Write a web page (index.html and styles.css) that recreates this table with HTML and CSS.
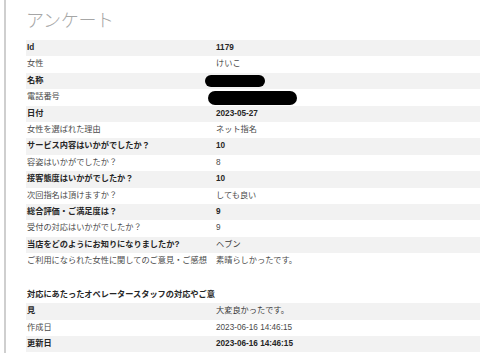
FILE: index.html
```html
<!DOCTYPE html>
<html lang="ja">
<head>
<meta charset="utf-8">
<title>アンケート</title>
<link rel="stylesheet" href="styles.css">
</head>
<body>
<div class="page">
  <h1 class="title">アンケート</h1>
  <table class="detail">
    <colgroup><col class="c-label"><col class="c-value"></colgroup>
    <tbody>
      <tr class="odd"><th>Id</th><td>1179</td></tr>
      <tr class="even"><th>女性</th><td>けいこ</td></tr>
      <tr class="odd"><th>名称</th><td><span class="redact r1"></span></td></tr>
      <tr class="even"><th>電話番号</th><td><span class="redact r2"></span></td></tr>
      <tr class="odd"><th>日付</th><td>2023-05-27</td></tr>
      <tr class="even"><th>女性を選ばれた理由</th><td>ネット指名</td></tr>
      <tr class="odd"><th>サービス内容はいかがでしたか？</th><td>10</td></tr>
      <tr class="even"><th>容姿はいかがでしたか？</th><td>8</td></tr>
      <tr class="odd"><th>接客態度はいかがでしたか？</th><td>10</td></tr>
      <tr class="even"><th>次回指名は頂けますか？</th><td>しても良い</td></tr>
      <tr class="odd"><th>総合評価・ご満足度は？</th><td>9</td></tr>
      <tr class="even"><th>受付の対応はいかがでしたか？</th><td>9</td></tr>
      <tr class="odd"><th>当店をどのようにお知りになりましたか?</th><td class="light">ヘブン</td></tr>
      <tr class="even"><th>ご利用になられた女性に関してのご意見・ご感想</th><td>素晴らしかったです。</td></tr>
      <tr class="even spacer"><th></th><td></td></tr>
      <tr class="odd split"><th><span class="wrap">対応にあたったオペレータースタッフの対応やご意見</span></th><td class="light bottom">大変良かったです。</td></tr>
      <tr class="even"><th>作成日</th><td>2023-06-16 14:46:15</td></tr>
      <tr class="odd"><th>更新日</th><td>2023-06-16 14:46:15</td></tr>
    </tbody>
  </table>
</div>
</body>
</html>
```

FILE: styles.css
```css
html, body {
  margin: 0;
  padding: 0;
  background: #fff;
}
body {
  font-family: "Liberation Sans", "Noto Sans CJK JP", sans-serif;
  overflow: hidden;
}
.page {
  margin-left: 4px;
  border-left: 2px solid #cfcfcf;
  padding-left: 20px;
  height: 353px;
  box-sizing: border-box;
}
.title {
  margin: 0;
  padding-top: 7px;
  height: 40px;
  box-sizing: border-box;
  font-family: "Noto Sans CJK JP", sans-serif;
  font-size: 18px;
  font-weight: 300;
  line-height: 24px;
  color: #a6a6a6;
  letter-spacing: -0.3px;
}
.detail {
  border-collapse: collapse;
  width: 454px;
  table-layout: fixed;
  font-size: 8.2px;
}
.c-label { width: 189px; }
.detail th, .detail td {
  padding: 0 0 0 1px;
  height: 16.4px;
  line-height: 16.4px;
  text-align: left;
  vertical-align: middle;
  white-space: nowrap;
}
.detail tr.odd { background: #f2f2f2; }
.detail tr.even { background: #fff; }
.detail tr.odd th, .detail tr.odd td {
  font-weight: bold;
  color: #262626;
}
.detail tr.even th, .detail tr.even td {
  font-weight: normal;
  color: #4a4a4a;
}
.detail tr.odd td.light {
  font-weight: normal;
  color: #3a3a3a;
}
.detail tr.spacer th, .detail tr.spacer td { height: 17px; }
.detail tr.split {
  background: linear-gradient(to bottom, #fff 0, #fff 50%, #f2f2f2 50%, #f2f2f2 100%);
}
.detail tr.split th, .detail tr.split td { height: 32.8px; }
.detail tr.split th { white-space: normal; vertical-align: top; }
.wrap {
  display: block;
  width: 191px;
  line-height: 16.4px;
  word-break: break-all;
}
.detail td.bottom { vertical-align: bottom; }
.redact {
  display: inline-block;
  background: #000;
  vertical-align: middle;
  position: relative;
}
.r1 {
  width: 60px;
  height: 12px;
  border-radius: 6px;
  margin-left: -11px;
}
.r2 {
  width: 89px;
  height: 14px;
  border-radius: 7px;
  margin-left: -8px;
  top: 1px;
}
```
